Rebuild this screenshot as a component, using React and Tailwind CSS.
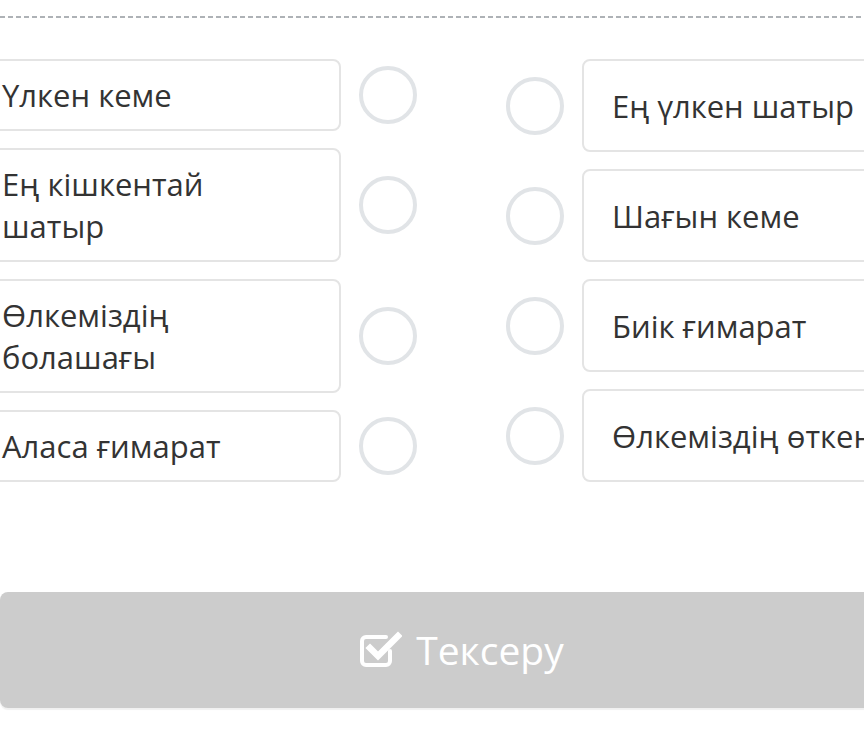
import React from "react";

const leftItems = ["Үлкен кеме", "Ең кішкентай шатыр", "Өлкеміздің болашағы", "Аласа ғимарат"];
const rightItems = ["Ең үлкен шатыр", "Шағын кеме", "Биік ғимарат", "Өлкеміздің өткені"];

function Circle() {
  return <div className="w-[58px] h-[58px] shrink-0 rounded-full border-[4px] border-[#e1e4e7] bg-white" />;
}

export default function App() {
  return (
    <div className="w-[864px] h-[747px] overflow-hidden bg-white font-['Open_Sans',sans-serif] text-[#333333]">
      <div className="pt-[16px]">
        <div className="h-[2px] w-full bg-[repeating-linear-gradient(to_right,#aeb2b6_0px,#aeb2b6_5px,transparent_5px,transparent_8px)]" />
      </div>
      <div className="mt-[41px] ml-[-28px] flex gap-[89px]">
        <div className="flex flex-col gap-[17px]">
          {leftItems.map((t) => (
            <div key={t} className="flex items-center gap-[18px]">
              <div className="w-[369px] shrink-0 rounded-lg border-2 border-[#e4e4e4] bg-white pl-[28px] pr-[40px] py-[13px] text-[31px] leading-[42px]">
                {t}
              </div>
              <Circle />
            </div>
          ))}
        </div>
        <div className="flex flex-col gap-[17px]">
          {rightItems.map((t) => (
            <div key={t} className="flex flex-1 items-center gap-[18px]">
              <Circle />
              <div className="flex w-[369px] shrink-0 items-center self-stretch whitespace-nowrap overflow-hidden rounded-lg border-2 border-[#e4e4e4] bg-white px-[28px] text-[31px] leading-[42px]">
                {t}
              </div>
            </div>
          ))}
        </div>
      </div>
      <div className="mt-[110px] flex h-[116px] w-[924px] items-center justify-center gap-[14px] rounded-lg bg-[#cccccc] text-white shadow-[0_2px_1px_rgba(0,0,0,0.06)]">
        <svg width="42" height="38" viewBox="0 0 42 38" fill="none" className="mt-[-2px]">
          <path d="M30 21v10a4 4 0 0 1-4 4H6a4 4 0 0 1-4-4V11a4 4 0 0 1 4-4h20" stroke="white" strokeWidth="4" strokeLinecap="round" />
          <path d="M10 18l8 8L38 6" stroke="white" strokeWidth="6.5" strokeLinecap="square" strokeLinejoin="miter" />
        </svg>
        <span className="text-[39px] leading-[56px]">Тексеру</span>
      </div>
    </div>
  );
}
